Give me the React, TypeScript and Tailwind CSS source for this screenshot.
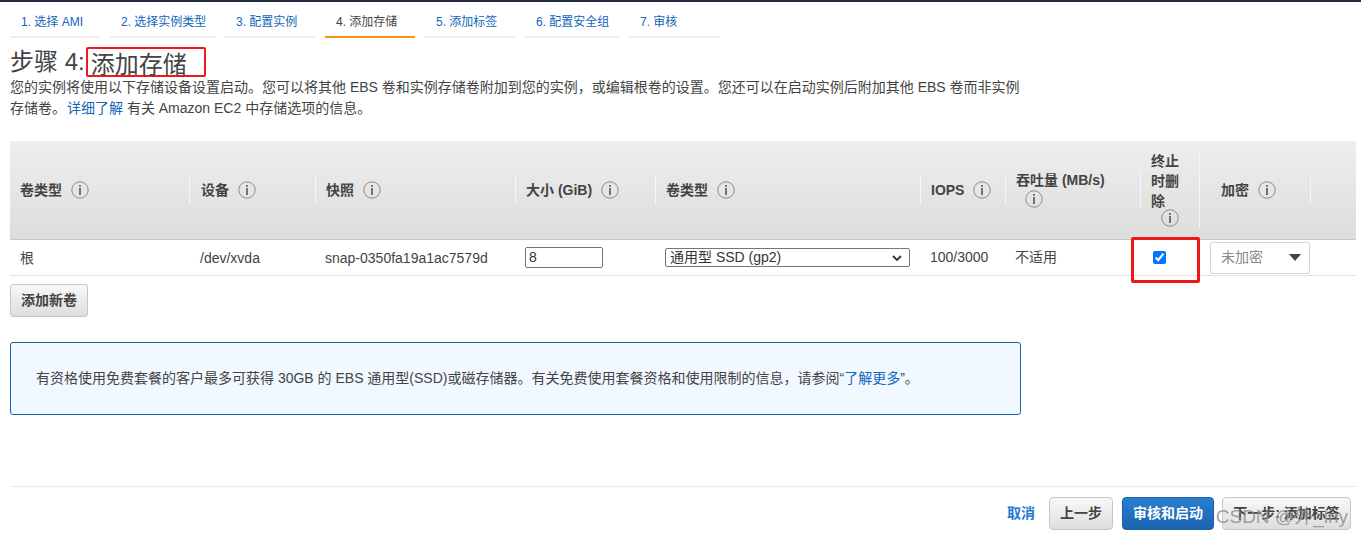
import React from 'react';

const steps = ['1. 选择 AMI', '2. 选择实例类型', '3. 配置实例', '4. 添加存储', '5. 添加标签', '6. 配置安全组', '7. 审核'];
const stepWidths = ['w-[90px]', 'w-[105px]', 'w-[90px]', 'w-[90px]', 'w-[90px]', 'w-[94px]', 'w-[90px]'];

const Info = ({ className = '' }: { className?: string }) => (
  <svg viewBox="0 0 18 18" className={`w-[18px] h-[18px] shrink-0 ${className}`}>
    <circle cx="9" cy="9" r="8.2" fill="none" stroke="#8c8c8c" strokeWidth="1" />
    <rect x="8.2" y="7" width="1.6" height="7" fill="#555" />
    <rect x="8.2" y="4" width="1.6" height="1.8" fill="#555" />
  </svg>
);

const Head = ({ w, label, pl = 'pl-[10px]' }: { w: string; label: string; pl?: string }) => (
  <div className={`${w} h-full flex items-center`}>
    <div className={`flex items-center gap-[9px] ${pl} h-[28px] w-full border-r border-[#f6f6f6]`}>
      <span className="font-bold">{label}</span>
      <Info />
    </div>
  </div>
);

export default function App() {
  return (
    <div className="w-[1361px] h-[539px] overflow-hidden bg-white text-[14px] text-[#444] border-t-2 border-[#232f3e] font-['Liberation_Sans','Noto_Sans_CJK_SC',sans-serif]">
      {/* wizard steps */}
      <div className="flex gap-[10px] pl-[10px] pt-[12px]">
        {steps.map((s, i) => (
          <div
            key={s}
            className={`${stepWidths[i]} h-[24px] pl-[11px] text-[12px] leading-[16px] border-b-2 ${i === 3 ? 'border-[#f7930d] text-[#444]' : 'border-[#eee] text-[#1166bb]'}`}
          >
            {s}
          </div>
        ))}
      </div>

      <div className="px-[10px]">
        <div className="h-[30px] mt-[9px] flex items-center text-[24px] leading-[30px] text-[#444]">
          <span>步骤 4:</span>
          <span className="ml-[1px] pl-[3px] w-[120px] h-[30px] leading-[31px] border-2 border-[#f01818] rounded-[2px]">添加存储</span>
        </div>
        <p className="w-[1015px] h-[42px] leading-[21px]">
          您的实例将使用以下存储设备设置启动。您可以将其他 EBS 卷和实例存储卷附加到您的实例，或编辑根卷的设置。您还可以在启动实例后附加其他 EBS 卷而非实例存储卷。
          <span className="ml-px text-[#1166bb]">详细了解</span> 有关 Amazon EC2 中存储选项的信息。
        </p>

        {/* volume table */}
        <div className="mt-[22px] w-[1346px] h-[99px] flex bg-gradient-to-b from-[#eeeeee] to-[#dddddd] border-b border-[#c8c8c8]">
          <Head w="w-[180px]" label="卷类型" />
          <Head w="w-[126px]" label="设备" pl="pl-[11px]" />
          <Head w="w-[200px]" label="快照" />
          <Head w="w-[140px]" label="大小 (GiB)" />
          <Head w="w-[265px]" label="卷类型" />
          <Head w="w-[85px]" label="IOPS" />
          <div className="w-[135px] h-full flex items-center">
            <div className="h-[38px] w-full pl-[10px] border-r border-[#f6f6f6] font-bold leading-[18px]">
              <div>吞吐量 (MB/s)</div>
              <Info className="ml-[9px] mt-px" />
            </div>
          </div>
          <div className="w-[59px] h-full flex items-center">
            <div className="h-[76px] w-full pl-[10px] border-r border-[#f6f6f6] font-bold leading-[20px]">
              <div className="w-[30px] mt-[-1px]">终止时删除</div>
              <Info className="ml-[10px] mt-[-2px]" />
            </div>
          </div>
          <Head w="w-[111px]" label="加密" pl="pl-[21px]" />
        </div>
        <div className="w-[1346px] h-[36px] flex items-center border-b border-[#e2e2e2]">
          <div className="w-[180px] pl-[10px] pt-px">根</div>
          <div className="w-[125px] pl-[10px] pt-px">/dev/xvda</div>
          <div className="w-[200px] pl-[10px] pt-px">snap-0350fa19a1ac7579d</div>
          <div className="w-[140px] pl-[10px]">
            <input
              readOnly
              value="8"
              className="w-[78px] h-[21px] px-[3px] border border-[#767676] rounded-[2px] outline-none text-[#333]"
            />
          </div>
          <div className="w-[265px] pl-[10px]">
            <div className="w-[245px] h-[19px] pl-[4px] pr-[6px] flex items-center justify-between border border-[#767676] rounded-[2px] text-[#333]">
              <span>通用型 SSD (gp2)</span>
              <svg viewBox="0 0 12 12" className="w-[12px] h-[12px]">
                <path d="M2 4l4 4 4-4" fill="none" stroke="#333" strokeWidth="1.8" />
              </svg>
            </div>
          </div>
          <div className="w-[85px] pl-[10px]">100/3000</div>
          <div className="w-[136px] pl-[10px]">不适用</div>
          <div className="w-[59px] h-full flex items-center pl-[12px] relative">
            <input type="checkbox" readOnly checked className="w-[13px] h-[13px] accent-[#0075ff]" />
            {/* annotation box from the screenshot */}
            <div className="absolute left-[-10px] top-[-3px] w-[69px] h-[46px] border-[3px] border-[#f01818] rounded-[2px]" />
          </div>
          <div className="pl-[10px]">
            <div className="w-[100px] h-[32px] pl-[10px] pr-[8px] flex items-center justify-between border border-[#d5d5d5] rounded-[3px] text-[#888]">
              <span>未加密</span>
              <span className="w-0 h-0 border-x-[6px] border-x-transparent border-t-[7px] border-t-[#444]" />
            </div>
          </div>
        </div>

        <button className="mt-[8px] block w-[78px] h-[33px] border border-[#c6c6c6] rounded-[3px] bg-gradient-to-b from-[#f8f8f8] to-[#dedede] font-bold text-[#444]">
          添加新卷
        </button>

        <div className="mt-[25px] w-[1011px] h-[73px] pl-[25px] flex items-center border border-[#1a66b0] rounded-[3px] bg-[#f1f8ff]">
          <span>
            有资格使用免费套餐的客户最多可获得 30GB 的 EBS 通用型(SSD)或磁存储器。有关免费使用套餐资格和使用限制的信息，请参阅“<span className="text-[#1166bb]">了解更多</span>”。
          </span>
        </div>

        {/* footer actions */}
        <div className="mt-[71px] w-[1346px] pt-[10px] border-t border-[#eaeaea] flex items-center justify-end gap-[9px] pr-[5px] relative">
          <span className="mr-[5px] text-[#1f78d1] font-bold">取消</span>
          <button className="w-[64px] h-[33px] border border-[#c6c6c6] rounded-[4px] bg-gradient-to-b from-[#f8f8f8] to-[#dedede] font-bold text-[#444]">上一步</button>
          <button className="w-[92px] h-[33px] border border-[#1a5ea3] rounded-[4px] bg-gradient-to-b from-[#2b80d2] to-[#1a62ae] font-bold text-white">审核和启动</button>
          <button className="w-[129px] -ml-px h-[33px] border border-[#c6c6c6] rounded-[4px] bg-gradient-to-b from-[#f8f8f8] to-[#dedede] font-bold text-[#444]">下一步: 添加标签</button>
          <span className="absolute right-[8px] top-[14px] text-[19px] leading-[32px] text-[#8a8a8a]/80 whitespace-nowrap">CSDN @外_lny</span>
        </div>
      </div>
    </div>
  );
}
